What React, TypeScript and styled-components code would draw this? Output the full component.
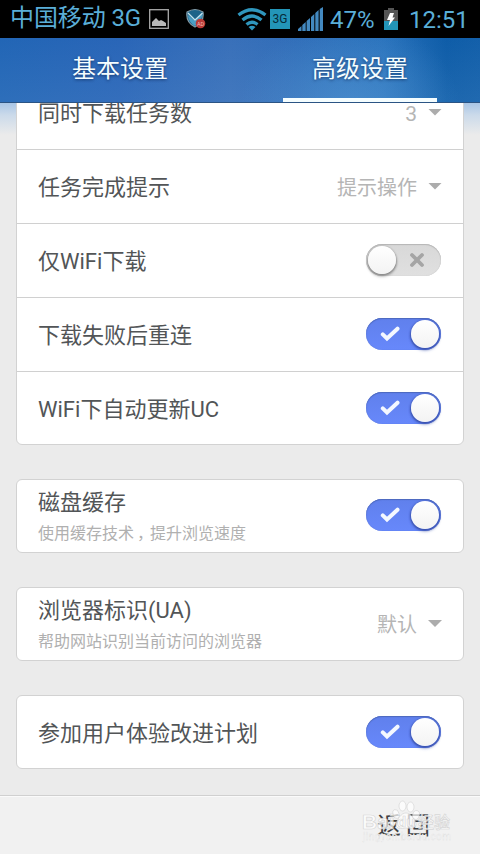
import React from "react";
import styled, { createGlobalStyle } from "styled-components";

const Global = createGlobalStyle`
  *{box-sizing:border-box}
  body{margin:0;background:#ebebeb;font-family:Roboto,"Noto Sans CJK SC",sans-serif;}
`;

const Screen = styled.div`
  width: 480px;
  height: 854px;
  overflow: hidden;
  display: flex;
  flex-direction: column;
  background: #ebebeb;
`;

const StatusBar = styled.div`
  height: 38px;
  flex: none;
  background: #000;
  color: #5aaed8;
  display: flex;
  align-items: center;
  padding-left: 10px;
  font-size: 24px;
  line-height: 38px;
  white-space: pre;
`;
const StatusText = styled.span<{ $w: number; $gap?: number }>`
  width: ${(p) => p.$w}px;
  margin-left: ${(p) => p.$gap ?? 0}px;
  padding-top: 1px;
  flex: none;
`;
const Carrier = styled(StatusText)`
  padding: 0 0 2px;
  letter-spacing: -0.1px;
`;
const StatusIcon = styled.svg<{ $gap: number }>`
  flex: none;
  display: block;
  margin-left: ${(p) => p.$gap}px;
`;

const Tabs = styled.nav`
  height: 65px;
  flex: none;
  display: grid;
  grid-template-columns: 1fr 1fr;
  background: radial-gradient(ellipse 110px 90px at 350px 70px, rgba(85, 155, 215, 0.5), transparent),
    linear-gradient(180deg, rgba(0, 40, 120, 0.04), rgba(110, 150, 200, 0.14)),
    linear-gradient(90deg, #2368b8 0%, #2b68ba 25%, #3b73bc 48%, #3270bb 62%, #2a74be 80%, #0f5faa 93%, #1462ac 100%);
  border-bottom: 1px solid #2b5484;
`;
const Tab = styled.div<{ $active?: boolean }>`
  margin: 0 43px;
  padding-top: 3px;
  text-align: center;
  font-size: 24px;
  line-height: 57px;
  color: #f4fdff;
  text-shadow: 0 1px 3px rgba(0, 20, 60, 0.6);
  border-bottom: 4px solid ${(p) => (p.$active ? "#f4fdff" : "transparent")};
`;

const Content = styled.main`
  flex: 1;
  min-height: 0;
  overflow: hidden;
  padding: 0 16px;
  background: linear-gradient(180deg, #a9c6e6 0, #cbdaea 12px, #ebebeb 32px);
`;
const Card = styled.section<{ $first?: boolean }>`
  background: #fff;
  border: 1px solid #d2d2d2;
  border-radius: 6px;
  margin-top: ${(p) => (p.$first ? -28 : 34)}px;
`;
const Label = styled.div`
  font-size: 22px;
  line-height: 32px;
  padding-top: 2px;
  color: #525557;
`;
const Row = styled.div`
  height: 74px;
  display: flex;
  align-items: center;
  justify-content: space-between;
  padding: 0 22px 0 21px;
  border-bottom: 1px solid #d0d0d0;
  &:last-child {
    height: 72px;
    border-bottom: 0;
  }
  &:last-child > ${Label} {
    padding-top: 4px;
  }
`;
const Described = styled.div`
  ${Label} {
    padding: 0 0 2px;
    margin-top: -1px;
  }
`;
const Hint = styled.div`
  font-size: 16px;
  line-height: 22px;
  margin-top: 2px;
  color: #b0b0b0;
`;
const Comma = styled.span`
  display: inline-block;
  width: 16px;
  text-indent: 3px;
`;
const Value = styled.div`
  display: flex;
  align-items: center;
  gap: 11px;
  font-size: 20px;
  line-height: 32px;
  padding-top: 2px;
  color: #b5b5b5;
`;
const Digit = styled.span`
  font-size: 21px;
`;
const Arrow = styled.i`
  width: 14px;
  height: 7px;
  margin: 0 -1px 3px 0;
  background: #acacac;
  clip-path: polygon(0 0, 100% 0, 50% 100%);
`;
const Track = styled.div<{ $on: boolean }>`
  width: 75px;
  height: 32px;
  margin-bottom: 2px;
  border-radius: 16px;
  display: flex;
  align-items: center;
  justify-content: space-between;
  flex-direction: ${(p) => (p.$on ? "row" : "row-reverse")};
  padding: ${(p) => (p.$on ? "0 2px 0 14px" : "0 16px 0 2px")};
  background: ${(p) => (p.$on ? "linear-gradient(#6080ec,#6788fb)" : "linear-gradient(#d8d8d8,#e0e0e0)")};
  box-shadow: inset 0 1px 1px ${(p) => (p.$on ? "#4d69bd" : "#b6b6b6")}, inset 0 0 1px ${(p) => (p.$on ? "#5773cc" : "#bbb")};

  ${Row}:last-child > & {
    margin-bottom: 0;
  }
  ${Described} + && {
    margin-bottom: 2px;
  }
`;
const Knob = styled.div<{ $on: boolean }>`
  width: 28px;
  height: 28px;
  border-radius: 50%;
  background: linear-gradient(#fff, #f3f3f3);
  box-shadow: 0 1px 2px 1px ${(p) => (p.$on ? "rgba(25,40,110,.5)" : "rgba(60,60,60,.4)")}, 0 3px 3px ${(p) => (p.$on ? "rgba(60,90,200,.25)" : "rgba(60,60,60,.2)")};
`;

const Footer = styled.footer`
  height: 59px;
  flex: none;
  border-top: 1px solid #d0d0d0;
  background: #f1f1f1;
  box-shadow: inset 0 1px #fafafa;
  display: flex;
  justify-content: flex-end;
  padding-right: 50px;
  position: relative;
`;
const Back = styled.div`
  font-size: 24px;
  line-height: 57px;
  padding-top: 2px;
  color: #3f4143;
  display: flex;
  gap: 5px;
`;
const Watermark = styled.svg`
  position: absolute;
  left: 358px;
  top: 0;
`;

function Toggle({ on = false }: { on?: boolean }) {
  return (
    <Track $on={on}>
      {on ? (
        <svg width="20" height="18" viewBox="0 0 20 18">
          <path d="M2.800 9.400 7 13.500 17.500 3.700" fill="none" stroke="#f4f8ff" strokeWidth="4" strokeLinejoin="miter" strokeLinecap="round" />
        </svg>
      ) : (
        <svg width="16" height="16" viewBox="0 0 16 16">
          <path d="M3 3 13 13M13 3 3 13" stroke="#a5a5a5" strokeWidth="3.8" strokeLinecap="round" />
        </svg>
      )}
      <Knob $on={on} />
    </Track>
  );
}

export default function App() {
  return (
    <Screen>
      <Global />
      <StatusBar>
        <Carrier $w={132}>中国移动 3G</Carrier>
        <StatusIcon $gap={7} width="20" height="20" viewBox="0 0 20 20">
          <rect x=".7" y=".7" width="18.6" height="18.6" fill="none" stroke="#aaa" strokeWidth="1.3" />
          <path d="M3 17v-4l4-4 3 3 2-1 2 1 3 2v3z" fill="#b9b9b9" />
        </StatusIcon>
        <StatusIcon $gap={17} width="21" height="22" viewBox="0 0 21 22">
          <path d="M1 4Q9-1 17 4c1 7-2 12-8 15C3 16 0 11 1 4Z" fill="#1d6388" stroke="#829aa6" strokeWidth="1.2" />
          <path d="M2 7 9 13 16.500 5 Q17 12 9 18 2 14 2 7Z" fill="#4a9ec4" />
          <path d="m2 5 7 7 7.500-7" fill="none" stroke="#c3e3ee" strokeWidth="1.300" />
          <circle cx="14.500" cy="15.500" r="4.800" fill="#b93a37" />
          <text x="14.500" y="17.700" fontSize="5.500" textAnchor="middle" fill="#f0b5b0">AD</text>
        </StatusIcon>
        <StatusIcon $gap={30} width="30" height="23" viewBox="0 0 30 23">
          <g fill="none" stroke="#2f96bd" strokeWidth="3.300">
            <path d="M1.500 7Q15-3.500 28.500 7" />
            <path d="M5.500 12q9.500-8 19 0" />
            <path d="M9.500 16.500q5.500-4.500 11 0" />
          </g>
          <path d="m11.500 19 3.500 3.500 3.500-3.500q-3.500-2.500-7 0" fill="#2f96bd" />
        </StatusIcon>
        <StatusIcon $gap={3} width="20" height="20" viewBox="0 0 20 20">
          <rect width="20" height="20" fill="#2395b8" />
          <text x="10" y="14" fontSize="12" textAnchor="middle" fill="#062b3a">3G</text>
        </StatusIcon>
        <StatusIcon $gap={8} width="26" height="24" viewBox="0 0 26 24">
          <path d="M0 24v-2l3.500-3v5zM4.300 24v-6l3.400-3v9zM8.600 24V14l3.400-3v13zM13 24v-14l3.300-3v17zM17.300 24V6l3.300-3v21zM21.700 24V2l3.300-2v24z" fill="#4389c0" />
        </StatusIcon>
        <StatusText $w={47} $gap={6}>47%</StatusText>
        <StatusIcon $gap={7} width="14" height="22" viewBox="0 0 14 22">
          <path d="M4 0h6v2h4v20H0V2h4z" fill="#555" />
          <path d="M0 13h14v9H0z" fill="#2395b8" />
          <path d="M6 5h4L8.500 9.500H11L4.500 18l1.500-6H3z" fill="#fff" />
        </StatusIcon>
        <StatusText $w={66} $gap={11}>12:51</StatusText>
      </StatusBar>
      <Tabs>
        <Tab>基本设置</Tab>
        <Tab $active>高级设置</Tab>
      </Tabs>
      <Content>
        <Card $first>
          <Row>
            <Label>同时下载任务数</Label>
            <Value><Digit>3</Digit><Arrow /></Value>
          </Row>
          <Row>
            <Label>任务完成提示</Label>
            <Value>提示操作<Arrow /></Value>
          </Row>
          <Row><Label>仅WiFi下载</Label><Toggle /></Row>
          <Row><Label>下载失败后重连</Label><Toggle on /></Row>
          <Row><Label>WiFi下自动更新UC</Label><Toggle on /></Row>
        </Card>
        <Card>
          <Row>
            <Described>
              <Label>磁盘缓存</Label>
              <Hint>使用缓存技术<Comma>，</Comma>提升浏览速度</Hint>
            </Described>
            <Toggle on />
          </Row>
        </Card>
        <Card>
          <Row>
            <Described>
              <Label>浏览器标识(UA)</Label>
              <Hint>帮助网站识别当前访问的浏览器</Hint>
            </Described>
            <Value>默认<Arrow /></Value>
          </Row>
        </Card>
        <Card>
          <Row><Label>参加用户体验改进计划</Label><Toggle on /></Row>
        </Card>
      </Content>
      <Footer>
        <Back><span>返</span><span>回</span></Back>
        <Watermark width="100" height="50" viewBox="0 0 100 50" aria-hidden="true">
          <g fill="#fff" fillOpacity=".72" stroke="#cfcfcf" strokeOpacity=".8" strokeWidth=".7">
            <ellipse cx="38" cy="18" rx="3" ry="4.500" transform="rotate(-15 38 18)" />
            <ellipse cx="44.500" cy="10" rx="3.500" ry="5" />
            <ellipse cx="52.500" cy="11" rx="3.500" ry="5" />
            <ellipse cx="58" cy="19" rx="3.300" ry="4.500" transform="rotate(15 58 19)" />
            <path d="M48 17c-5 0-8 6-10 10-1 6 5 6 10 5 5 1 11 0 10-5-2-4-5-10-10-10z" />
            <text x="4" y="32.500" fontSize="21" fontWeight="700" fontFamily="Liberation Sans">Bai</text>
            <text x="39" y="31" fontSize="15" fontWeight="700" fontFamily="Liberation Sans">du</text>
            <text x="60" y="32" fontSize="16" fontWeight="500">经验</text>
          </g>
          <text x="5" y="44" fontSize="10" fill="#fbfbfb" stroke="#ddd" strokeWidth=".3" textLength="88">jingyan.baidu.com</text>
        </Watermark>
      </Footer>
    </Screen>
  );
}
